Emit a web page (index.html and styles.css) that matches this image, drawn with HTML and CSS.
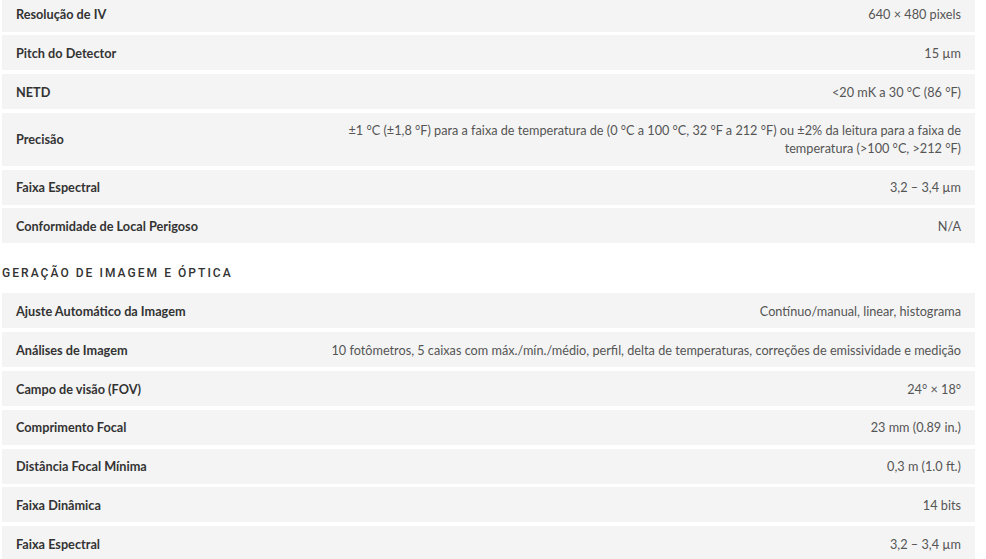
FILE: index.html
```html
<!DOCTYPE html>
<html lang="pt">
<head>
<meta charset="utf-8">
<title>Especificações</title>
<link rel="stylesheet" href="styles.css">
</head>
<body>
<div class="page">
  <section class="specs">
    <div class="row"><div class="label">Resolução de IV</div><div class="value">640 × 480 pixels</div></div>
    <div class="row"><div class="label">Pitch do Detector</div><div class="value">15 µm</div></div>
    <div class="row"><div class="label">NETD</div><div class="value">&lt;20 mK a 30 °C (86 °F)</div></div>
    <div class="row"><div class="label">Precisão</div><div class="value">±1 °C (±1,8 °F) para a faixa de temperatura de (0 °C a 100 °C, 32 °F a 212 °F) ou ±2% da leitura para a faixa de temperatura (&gt;100 °C, &gt;212 °F)</div></div>
    <div class="row"><div class="label">Faixa Espectral</div><div class="value">3,2 – 3,4 µm</div></div>
    <div class="row"><div class="label">Conformidade de Local Perigoso</div><div class="value">N/A</div></div>
  </section>
  <h2 class="section-title">Geração de Imagem e Óptica</h2>
  <section class="specs">
    <div class="row"><div class="label">Ajuste Automático da Imagem</div><div class="value">Contínuo/manual, linear, histograma</div></div>
    <div class="row"><div class="label">Análises de Imagem</div><div class="value">10 fotômetros, 5 caixas com máx./mín./médio, perfil, delta de temperaturas, correções de emissividade e medição</div></div>
    <div class="row"><div class="label">Campo de visão (FOV)</div><div class="value">24° × 18°</div></div>
    <div class="row"><div class="label">Comprimento Focal</div><div class="value">23 mm (0.89 in.)</div></div>
    <div class="row"><div class="label">Distância Focal Mínima</div><div class="value">0,3 m (1.0 ft.)</div></div>
    <div class="row"><div class="label">Faixa Dinâmica</div><div class="value">14 bits</div></div>
    <div class="row"><div class="label">Faixa Espectral</div><div class="value">3,2 – 3,4 µm</div></div>
  </section>
</div>
</body>
</html>
```

FILE: styles.css
```css
html, body {
  margin: 0;
  padding: 0;
  background: #ffffff;
  overflow: hidden;
}

.page {
  width: 973px;
  margin: -3.5px 0 0 2px;
  font-family: "Lato", "Noto Sans", sans-serif;
  font-size: 12.7px;
  color: #333333;
}

.specs {
  display: flex;
  flex-direction: column;
  gap: 3.8px;
}

.row {
  display: grid;
  grid-template-columns: 285px 1fr;
  align-items: center;
  background: #f4f4f4;
  padding: 8.5px 14px;
  line-height: 18px;
}

.label {
  font-weight: 700;
  color: #333333;
}

.value {
  text-align: right;
  color: #555555;
}

.section-title {
  margin: 0;
  padding: 23px 0 13px;
  font-family: "Roboto", "DejaVu Sans", sans-serif;
  font-weight: 500;
  font-size: 12px;
  line-height: 14px;
  letter-spacing: 2.05px;
  text-transform: uppercase;
  color: #333333;
}
```
